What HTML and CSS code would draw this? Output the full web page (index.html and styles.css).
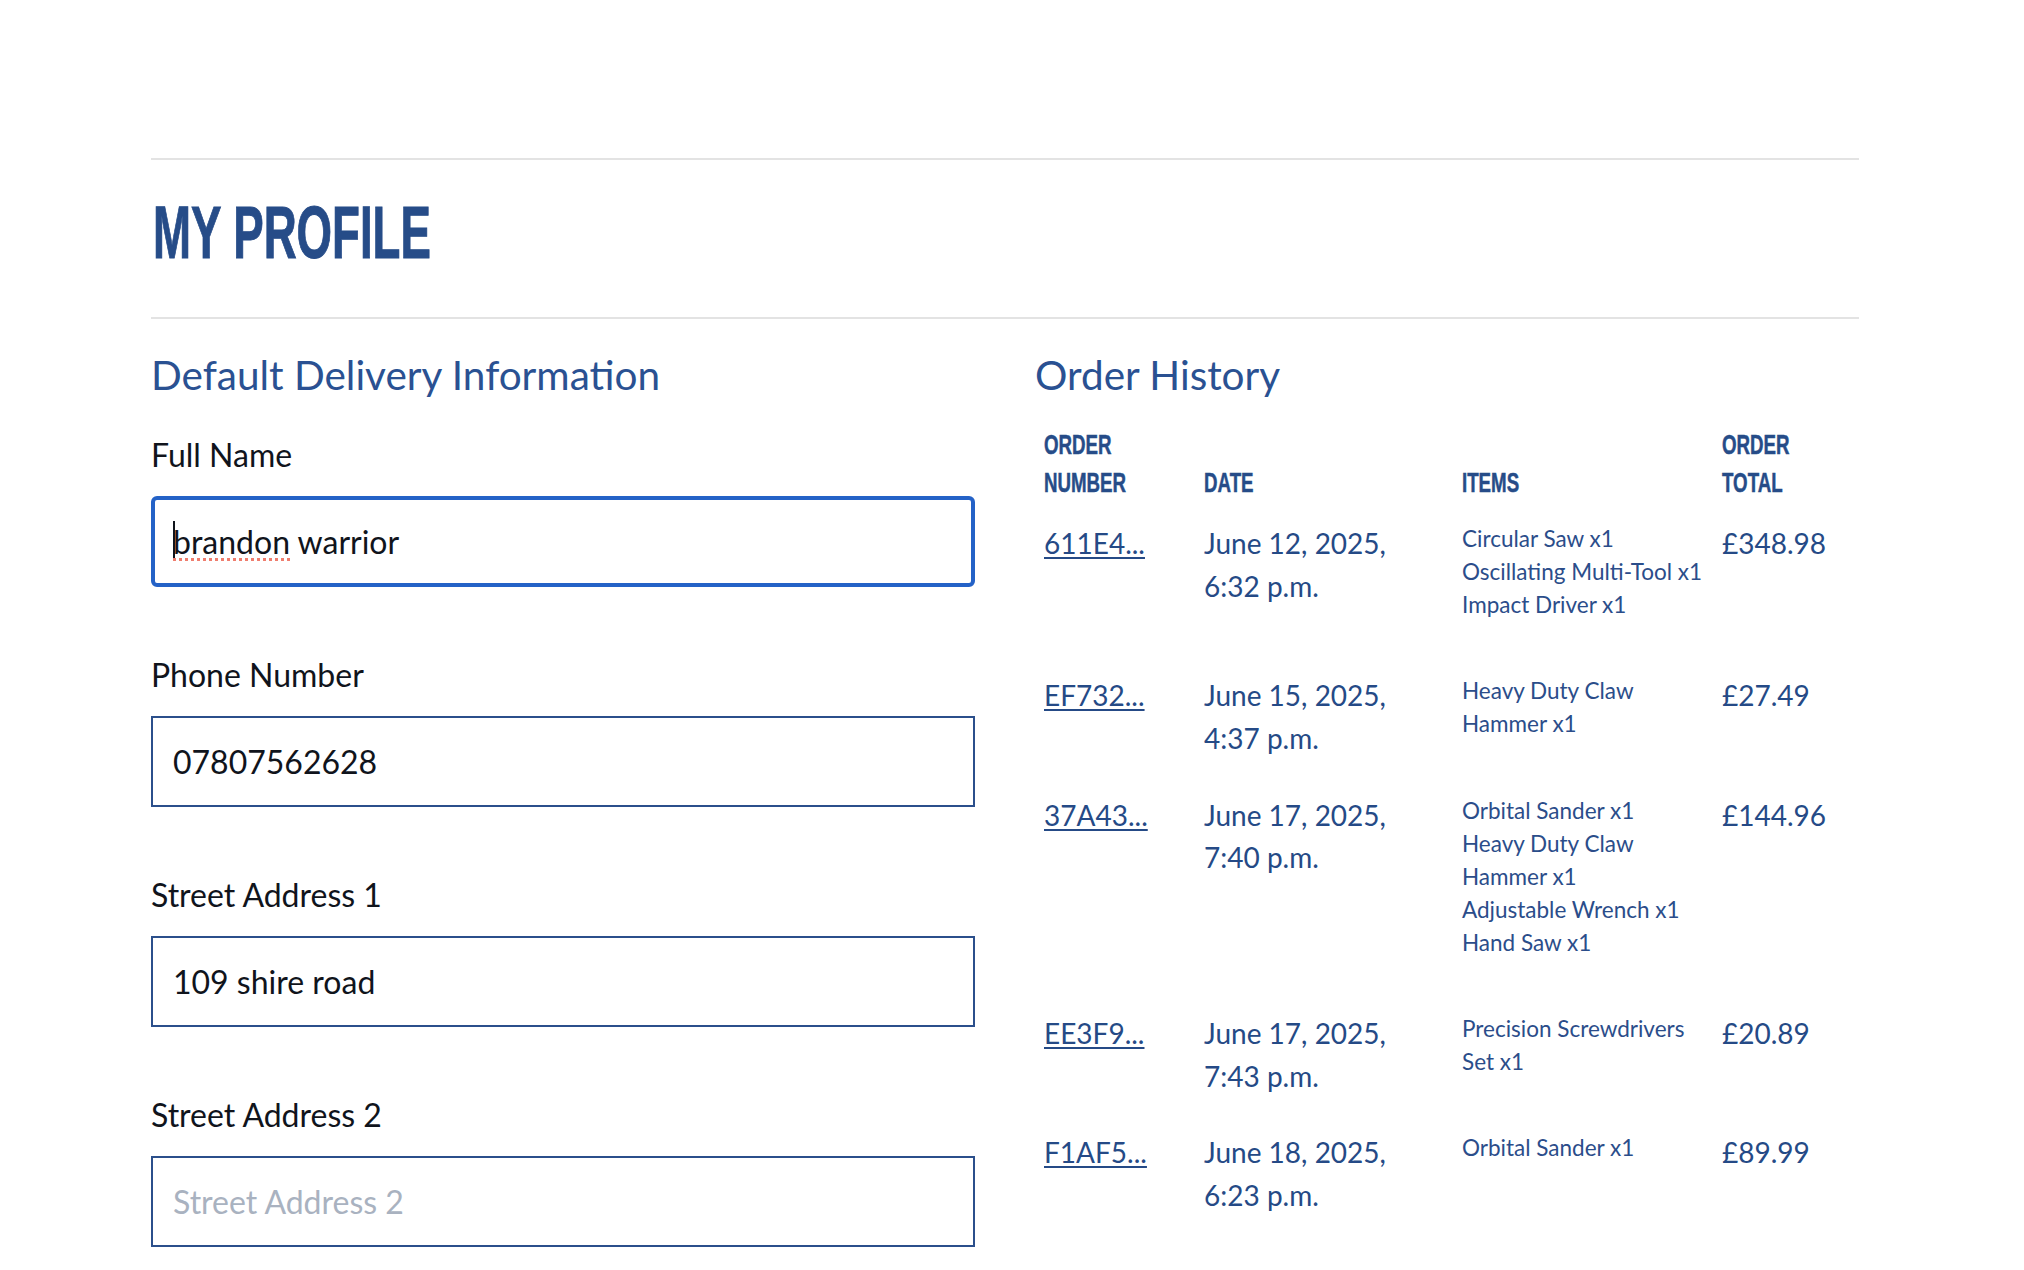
FILE: index.html
```html
<!DOCTYPE html>
<html lang="en">
<head>
<meta charset="utf-8">
<title>My Profile</title>
<link rel="stylesheet" href="styles.css">
</head>
<body>
<main class="page">
  <div class="rule"></div>
  <h1 class="title"><span class="condensed">MY PROFILE</span></h1>
  <div class="rule"></div>

  <div class="cols">
    <section class="col">
      <h2 class="section-title">Default Delivery Information</h2>
      <form class="form">
        <div class="field">
          <label class="label" for="full-name">Full Name</label>
          <div class="input input-focused" id="full-name"><span class="caret"></span><span class="misspelled">brandon</span> warrior</div>
        </div>
        <div class="field">
          <label class="label" for="phone">Phone Number</label>
          <input class="input" id="phone" type="text" value="07807562628">
        </div>
        <div class="field">
          <label class="label" for="street1">Street Address 1</label>
          <input class="input" id="street1" type="text" value="109 shire road">
        </div>
        <div class="field">
          <label class="label" for="street2">Street Address 2</label>
          <input class="input" id="street2" type="text" placeholder="Street Address 2">
        </div>
      </form>
    </section>

    <section class="col">
      <h2 class="section-title">Order History</h2>
      <table class="orders">
        <colgroup>
          <col class="c-num">
          <col class="c-date">
          <col class="c-items">
          <col class="c-total">
        </colgroup>
        <thead>
          <tr>
            <th><span class="th-label">ORDER NUMBER</span></th>
            <th><span class="th-label">DATE</span></th>
            <th><span class="th-label">ITEMS</span></th>
            <th><span class="th-label">ORDER TOTAL</span></th>
          </tr>
        </thead>
        <tbody>
          <tr>
            <td><a class="order-link" href="#">611E4...</a></td>
            <td>June 12, 2025, 6:32 p.m.</td>
            <td><ul class="items"><li>Circular Saw x1</li><li>Oscillating Multi-Tool x1</li><li>Impact Driver x1</li></ul></td>
            <td>£348.98</td>
          </tr>
          <tr>
            <td><a class="order-link" href="#">EF732...</a></td>
            <td>June 15, 2025, 4:37 p.m.</td>
            <td><ul class="items"><li>Heavy Duty Claw Hammer x1</li></ul></td>
            <td>£27.49</td>
          </tr>
          <tr>
            <td><a class="order-link" href="#">37A43...</a></td>
            <td>June 17, 2025, 7:40 p.m.</td>
            <td><ul class="items"><li>Orbital Sander x1</li><li>Heavy Duty Claw Hammer x1</li><li>Adjustable Wrench x1</li><li>Hand Saw x1</li></ul></td>
            <td>£144.96</td>
          </tr>
          <tr>
            <td><a class="order-link" href="#">EE3F9...</a></td>
            <td>June 17, 2025, 7:43 p.m.</td>
            <td><ul class="items"><li>Precision Screwdrivers Set x1</li></ul></td>
            <td>£20.89</td>
          </tr>
          <tr>
            <td><a class="order-link" href="#">F1AF5...</a></td>
            <td>June 18, 2025, 6:23 p.m.</td>
            <td><ul class="items"><li>Orbital Sander x1</li></ul></td>
            <td>£89.99</td>
          </tr>
        </tbody>
      </table>
    </section>
  </div>
</main>
</body>
</html>
```

FILE: styles.css
```css
* {
  box-sizing: border-box;
}

html, body {
  margin: 0;
  padding: 0;
  background: #ffffff;
}

body {
  font-family: Lato, "Noto Sans", sans-serif;
  color: #10141c;
}

.page {
  width: 1708px;
  margin-left: 151px;
  padding-top: 158px;
}

.rule {
  height: 2px;
  background: #e3e3e3;
}

.title {
  margin: 35px 0 48px 0;
  font-family: "Liberation Sans", Arial, sans-serif;
  font-weight: 700;
  font-size: 75px;
  line-height: 74px;
  height: 74px;
  color: #264c88;
  white-space: nowrap;
}

.condensed {
  display: inline-block;
  transform: scaleX(0.608);
  transform-origin: left center;
  margin-left: 2px;
  -webkit-text-stroke: 1px #264c88;
}

.cols {
  display: grid;
  grid-template-columns: 824px 824px;
  column-gap: 60px;
  padding-top: 33px;
}

.section-title {
  margin: 0;
  font-family: Lato, sans-serif;
  font-weight: 400;
  font-size: 40.5px;
  line-height: 45.6px;
  color: #2a5192;
}

.form {
  display: flex;
  flex-direction: column;
  padding-top: 35px;
}

.field {
  display: flex;
  flex-direction: column;
  gap: 19.5px;
  margin-bottom: 66px;
}

.label {
  font-size: 32px;
  line-height: 43.5px;
  color: #10141c;
}

.input {
  display: block;
  width: 824px;
  height: 91px;
  margin: 0;
  padding: 0 20px;
  border: 2px solid #2b4f8b;
  border-radius: 0;
  background: #fff;
  font-family: Lato, sans-serif;
  font-size: 32px;
  color: #10141c;
  outline: none;
}

.input::placeholder {
  color: #a9b2c0;
  opacity: 1;
}

.input-focused {
  display: flex;
  align-items: center;
  border: 4px solid #2462c7;
  border-radius: 6px;
  padding: 0 18px;
  white-space: pre;
}

.caret {
  display: inline-block;
  width: 2px;
  height: 40px;
  background: #10141c;
  margin-right: -2px;
  align-self: center;
}

.misspelled {
  text-decoration: underline dotted #ef7d6e;
  text-decoration-thickness: 3px;
  text-underline-offset: 4px;
}

.orders {
  width: 824px;
  margin-top: 25px;
  border-collapse: collapse;
  table-layout: fixed;
  color: #254a86;
}

.c-num { width: 160px; }
.c-date { width: 258px; }
.c-items { width: 260px; }
.c-total { width: 146px; }

.orders th {
  text-align: left;
  vertical-align: bottom;
  padding: 3px 9px 3.7px 9px;
  font-family: "Liberation Sans", Arial, sans-serif;
  font-weight: 700;
  font-size: 28px;
  line-height: 38px;
  color: #264c88;
}

.th-label {
  display: inline-block;
  transform: scaleX(0.668);
  transform-origin: left center;
  -webkit-text-stroke: 0.5px #264c88;
}

.orders td {
  vertical-align: top;
  padding: 16.6px 9px;
  font-size: 28px;
  line-height: 42.75px;
}

.order-link {
  color: #254a86;
  text-decoration: underline;
  text-underline-offset: 3px;
  text-decoration-thickness: 2px;
}

.items {
  list-style: none;
  margin: 0 0 20.2px 0;
  padding: 0;
  font-size: 22.5px;
  line-height: 33px;
  color: #2b4d8a;
}
```
